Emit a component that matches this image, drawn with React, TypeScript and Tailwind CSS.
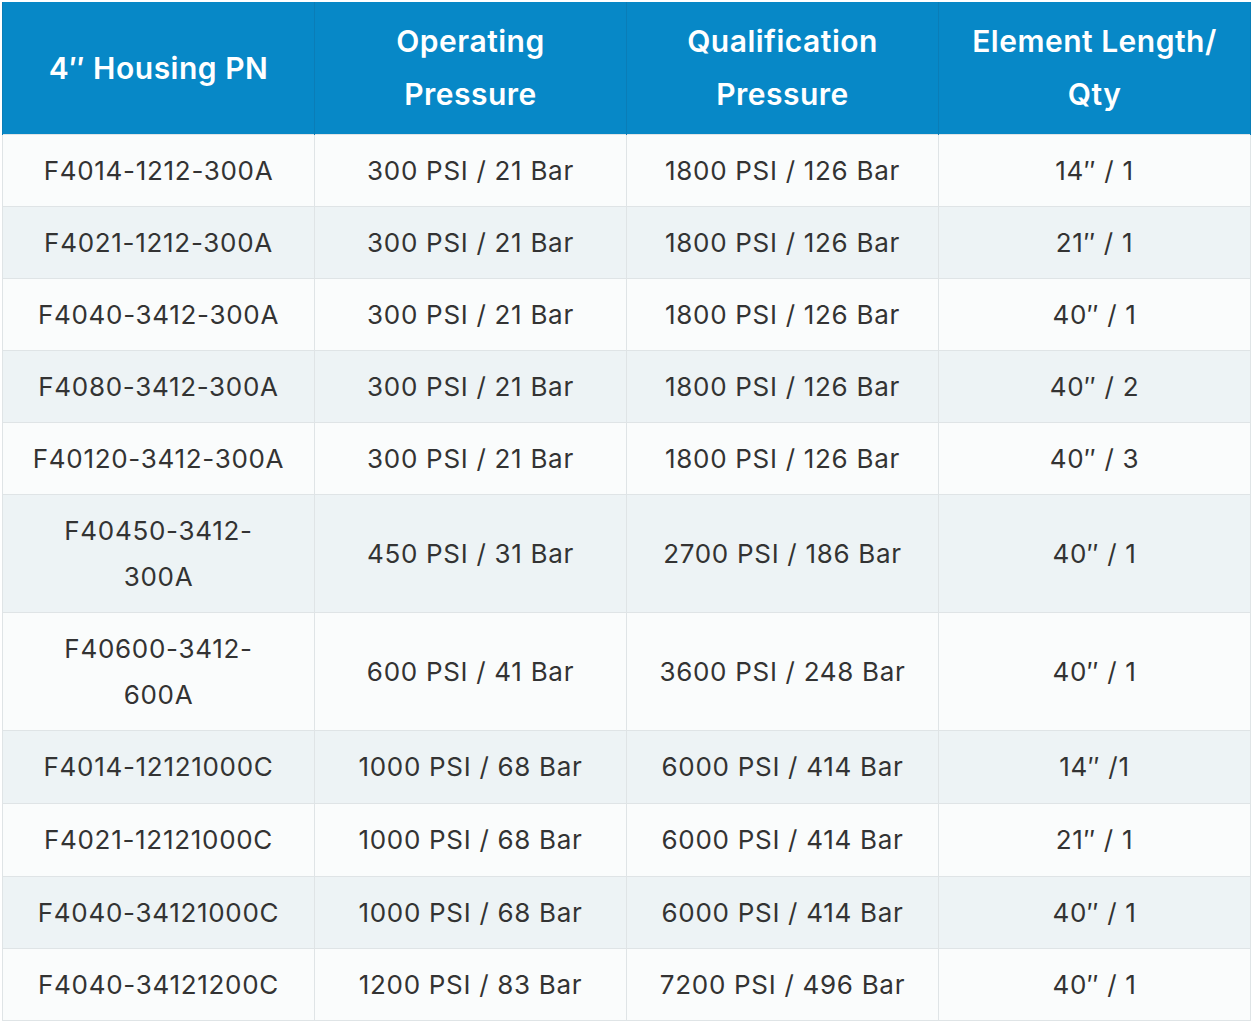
const rows: [string, string, string, string][] = [
  ["F4014-1212-300A", "300 PSI / 21 Bar", "1800 PSI / 126 Bar", "14″ / 1"],
  ["F4021-1212-300A", "300 PSI / 21 Bar", "1800 PSI / 126 Bar", "21″ / 1"],
  ["F4040-3412-300A", "300 PSI / 21 Bar", "1800 PSI / 126 Bar", "40″ / 1"],
  ["F4080-3412-300A", "300 PSI / 21 Bar", "1800 PSI / 126 Bar", "40″ / 2"],
  ["F40120-3412-300A", "300 PSI / 21 Bar", "1800 PSI / 126 Bar", "40″ / 3"],
  ["F40450-3412-\n300A", "450 PSI / 31 Bar", "2700 PSI / 186 Bar", "40″ / 1"],
  ["F40600-3412-\n600A", "600 PSI / 41 Bar", "3600 PSI / 248 Bar", "40″ / 1"],
  ["F4014-12121000C", "1000 PSI / 68 Bar", "6000 PSI / 414 Bar", "14″ /1"],
  ["F4021-12121000C", "1000 PSI / 68 Bar", "6000 PSI / 414 Bar", "21″ / 1"],
  ["F4040-34121000C", "1000 PSI / 68 Bar", "6000 PSI / 414 Bar", "40″ / 1"],
  ["F4040-34121200C", "1200 PSI / 83 Bar", "7200 PSI / 496 Bar", "40″ / 1"],
];

const headers = ["4″ Housing PN", "Operating Pressure", "Qualification Pressure", "Element Length/ Qty"];

export default function App() {
  return (
    <div className="bg-white min-h-screen pt-[2px] pl-[2px]" style={{ fontFamily: "Inter, 'Noto Sans', sans-serif" }}>
      <table className="w-[1248px] table-fixed border-collapse">
        <thead>
          <tr className="bg-[#0788c7]">
            {headers.map((h) => (
              <th
                key={h}
                className="w-[312px] border-x border-[#0a7db7] px-[24px] py-[13px] text-[30px] leading-[53px] font-semibold text-white text-center tracking-[0.5px]"
              >
                {h}
              </th>
            ))}
          </tr>
        </thead>
        <tbody>
          {rows.map((r, i) => (
            <tr key={r[0]} className={i % 2 === 0 ? "bg-[#fafcfc]" : "bg-[#edf3f5]"}>
              {r.map((c, j) => (
                <td
                  key={j}
                  className={
                    "border border-[#dfe4e6] px-[20px] text-center text-[26px] leading-[46px] text-[#333333] tracking-[0.7px] whitespace-pre-line " +
                    (i === 7 || i === 8 ? "py-[13px]" : "py-[12.5px]")
                  }
                >
                  {c}
                </td>
              ))}
            </tr>
          ))}
        </tbody>
      </table>
    </div>
  );
}
